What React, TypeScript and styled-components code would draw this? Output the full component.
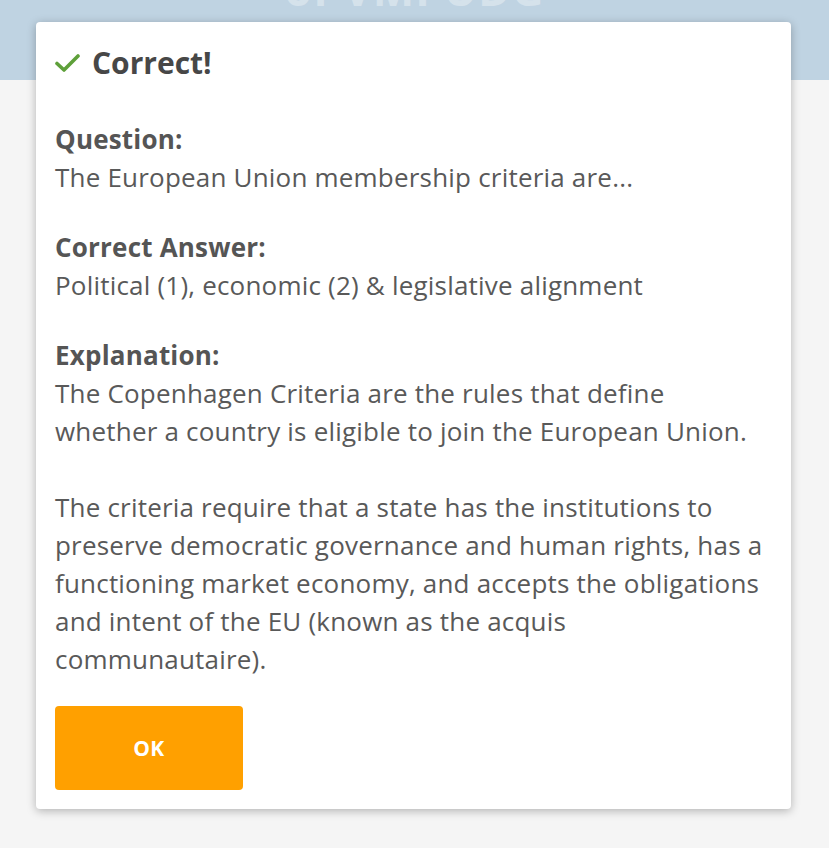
import React from "react";
import styled, { createGlobalStyle } from "styled-components";

const GlobalStyle = createGlobalStyle`
  html, body {
    margin: 0;
    padding: 0;
    background: #f5f5f5;
    font-family: "Open Sans", "Liberation Sans", sans-serif;
  }
`;

const Page = styled.div`
  position: relative;
  width: 829px;
  height: 848px;
  overflow: hidden;
  background: #f5f5f5;
`;

const Header = styled.header`
  height: 80px;
  background: #bfd3e2;
  display: flex;
  justify-content: center;
  overflow: hidden;
`;

const HeaderTitle = styled.div`
  margin-top: -36px;
  font-size: 44px;
  line-height: 50px;
  font-weight: 700;
  color: rgba(255, 255, 255, 0.35);
  letter-spacing: 1px;
`;

const Backdrop = styled.div`
  position: absolute;
  inset: 0;
  padding: 22px 38px 40px 36px;
`;

const Dialog = styled.div`
  background: #fff;
  border-radius: 4px;
  box-shadow: 0 2px 10px rgba(0, 0, 0, 0.28);
  padding: 24px 24px 19px 19px;
  color: #555;
`;

const Title = styled.h2`
  display: flex;
  align-items: center;
  gap: 12px;
  margin: 0 0 40px 0;
  font-size: 30px;
  line-height: 34px;
  font-weight: 700;
  color: #474747;
`;

const Block = styled.section<{ $last?: boolean }>`
  margin-bottom: ${(p) => (p.$last ? "0" : "32px")};
  font-size: 26px;
  line-height: 38px;
  letter-spacing: 0.2px;
`;

const Label = styled.div`
  font-weight: 700;
  color: #555;
`;

const Text = styled.p`
  margin: 0;
  color: #595959;
`;

const OkButton = styled.button`
  display: block;
  width: 188px;
  height: 84px;
  border: none;
  border-radius: 4px;
  background: #ffa000;
  color: #fff;
  font-family: "Open Sans", "Liberation Sans", sans-serif;
  font-size: 21px;
  font-weight: 700;
  letter-spacing: 0.5px;
  margin-top: 28px;
`;

function Check() {
  return (
    <svg width="25" height="20" viewBox="0 0 25 20">
      <path
        d="M2 10.5 L9 17 L23 3"
        fill="none"
        stroke="#5ea03a"
        strokeWidth="3.6"
        strokeLinecap="round"
        strokeLinejoin="round"
      />
    </svg>
  );
}

export default function App() {
  return (
    <Page>
      <GlobalStyle />
      <Header>
        <HeaderTitle>of VMPUDG</HeaderTitle>
      </Header>
      <Backdrop>
        <Dialog>
          <Title>
            <Check />
            Correct!
          </Title>
          <Block>
            <Label>Question:</Label>
            <Text>The European Union membership criteria are...</Text>
          </Block>
          <Block>
            <Label>Correct Answer:</Label>
            <Text>Political (1), economic (2) &amp; legislative alignment</Text>
          </Block>
          <Block $last>
            <Label>Explanation:</Label>
            <Text>
              The Copenhagen Criteria are the rules that define whether a
              country is eligible to join the European Union.
              <br />
              <br />
              The criteria require that a state has the institutions to
              preserve democratic governance and human rights, has a
              functioning market economy, and accepts the obligations and
              intent of the EU (known as the acquis communautaire).
            </Text>
          </Block>
          <OkButton>OK</OkButton>
        </Dialog>
      </Backdrop>
    </Page>
  );
}
